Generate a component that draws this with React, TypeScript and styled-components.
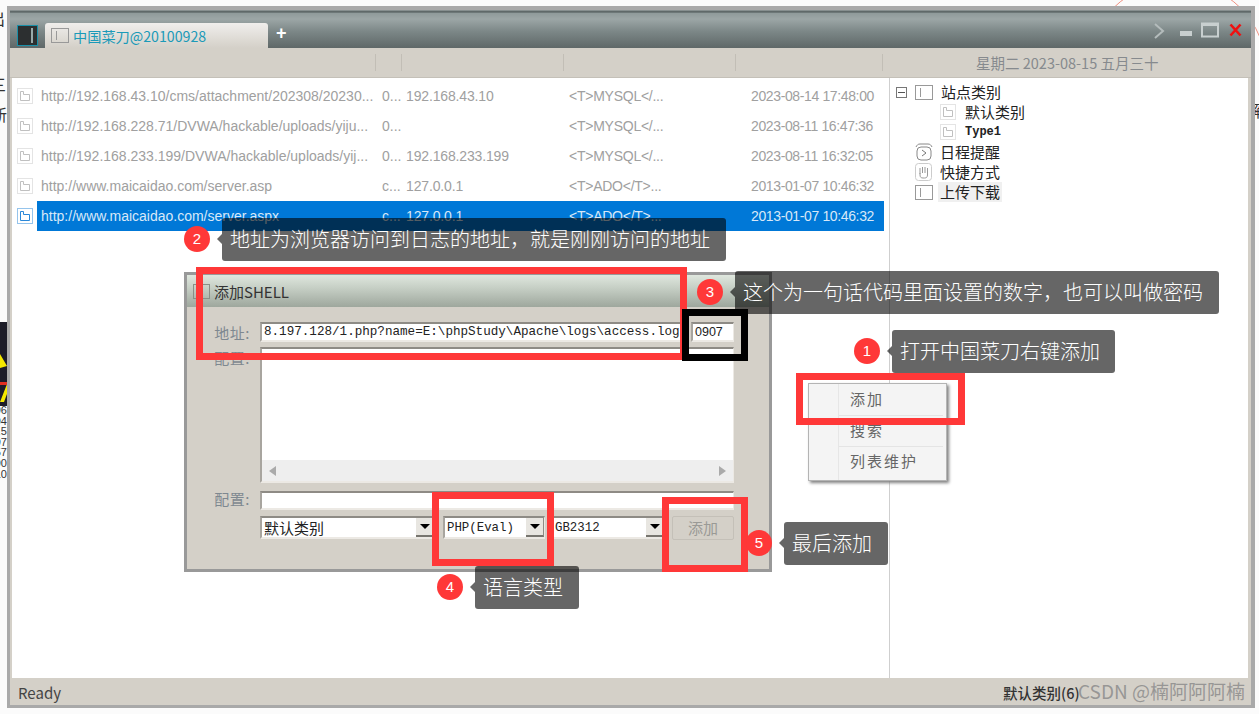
import { FC } from "react";
import styled, { createGlobalStyle } from "styled-components";

const sans = `"Liberation Sans", "Noto Sans CJK SC", sans-serif`;
const cjk = `"Noto Sans CJK SC", "Liberation Sans", sans-serif`;
const mono = `"Liberation Mono", "Noto Sans CJK SC", monospace`;

const rows = [
  ["http://192.168.43.10/cms/attachment/202308/20230...", "0...", "192.168.43.10", "<T>MYSQL</...", "2023-08-14 17:48:00"],
  ["http://192.168.228.71/DVWA/hackable/uploads/yiju...", "0...", "", "<T>MYSQL</...", "2023-08-11 16:47:36"],
  ["http://192.168.233.199/DVWA/hackable/uploads/yij...", "0...", "192.168.233.199", "<T>MYSQL</...", "2023-08-11 16:32:05"],
  ["http://www.maicaidao.com/server.asp", "c...", "127.0.0.1", "<T>ADO</T>...", "2013-01-07 10:46:32"],
  ["http://www.maicaidao.com/server.aspx", "c...", "127.0.0.1", "<T>ADO</T>...", "2013-01-07 10:46:32"],
];

const headerCells = [366, 26, 162, 172, 147];

const callouts = [
  { n: 2, x: 184, y: 218, w: 504, text: "地址为浏览器访问到日志的地址，就是刚刚访问的地址" },
  { n: 3, x: 697, y: 271, w: 484, text: "这个为一句话代码里面设置的数字，也可以叫做密码" },
  { n: 1, x: 854, y: 330, w: 223, text: "打开中国菜刀右键添加" },
  { n: 4, x: 437, y: 566, w: 104, text: "语言类型" },
  { n: 5, x: 746, y: 522, w: 104, text: "最后添加" },
];

const frames = [
  { x: 196, y: 267, w: 491, h: 93, color: "#ff3838" },
  { x: 682, y: 309, w: 66, h: 52, color: "#000000" },
  { x: 796, y: 373, w: 169, h: 52, color: "#ff3838" },
  { x: 432, y: 492, w: 122, h: 74, color: "#ff3838" },
  { x: 662, y: 497, w: 86, h: 75, color: "#ff3838" },
];

const GlobalStyle = createGlobalStyle`
  html, body {
    margin: 0;
    padding: 0;
    background: #ffffff;
  }
  * {
    box-sizing: border-box;
  }
`;

const Page = styled.div`
  position: relative;
  width: 1259px;
  height: 714px;
  overflow: hidden;
  padding: 6px 4px 6px 7px;
  background: #fbfbfb;
  font-family: ${sans};
`;

const BackdropScrap = styled.div<{ $top: number; $left: number; $color?: string }>`
  position: absolute;
  top: ${(p) => p.$top}px;
  left: ${(p) => p.$left}px;
  font-family: ${cjk};
  font-size: 16px;
  line-height: 21px;
  color: ${(p) => p.$color ?? "#333"};
  white-space: pre;
`;

const Numbers = styled.div`
  position: absolute;
  top: 405px;
  left: -12px;
  width: 19px;
  text-align: right;
  font-family: ${sans};
  font-size: 11px;
  line-height: 10.6px;
  color: #333;
`;

const Arc = styled.div`
  position: absolute;
  top: -19px;
  left: 1087px;
  width: 180px;
  height: 180px;
  border: 1px solid #f09080;
  border-radius: 50%;
`;

const ImageScrap = styled.svg`
  position: absolute;
  top: 322px;
  left: 0;
`;

const Window = styled.div`
  position: relative;
  height: 702px;
  display: flex;
  flex-direction: column;
  border: 3px solid #a9a9a9;
  border-top-width: 4px;
  border-right-width: 4px;
  background: #d4d0c8;
`;

const TitleBar = styled.div`
  height: 38px;
  flex: none;
  display: flex;
  align-items: flex-end;
  padding-left: 7px;
  background: linear-gradient(
    to bottom,
    #9aa2a2 0,
    #4c5656 2px,
    #8f9a9a 3px,
    #9ca6a6 9px,
    #7b8686 22px,
    #5f6868 100%
  );
`;

const AppIcon = styled.div`
  width: 21px;
  height: 21px;
  margin-bottom: 2px;
  display: flex;
  justify-content: flex-end;
  padding: 2px 4px 2px 2px;
  border: 1px solid #1a8fa8;
  background: #2c2f30;
  &::after {
    content: "";
    width: 2px;
    background: #9aa;
  }
`;

const Tab = styled.div`
  width: 223px;
  height: 25px;
  margin-left: 7px;
  display: flex;
  align-items: center;
  gap: 4px;
  padding-left: 6px;
  border-radius: 3px 3px 0 0;
  background: linear-gradient(to bottom, #f0eeec, #d4d0c8);
  font-family: ${cjk};
  font-size: 14.2px;
  color: #1b9ab8;
`;

const PlusSign = styled.span`
  align-self: center;
  margin: 8px 0 0 8px;
  font-family: ${sans};
  font-size: 18px;
  font-weight: bold;
  color: #ffffff;
`;

const WindowControls = styled.div`
  margin-left: auto;
  align-self: stretch;
  display: flex;
  align-items: flex-start;
  gap: 7px;
  padding: 12px 9px 0 0;
`;

const ColumnStrip = styled.div`
  height: 30px;
  flex: none;
  display: flex;
  align-items: center;
  border-bottom: 1px solid #c4c0b8;
`;

const StripCell = styled.div<{ $w: number }>`
  width: ${(p) => p.$w}px;
  height: 17px;
  flex: none;
  border-right: 1px solid #c2beb6;
`;

const DateText = styled.div`
  margin-left: 93px;
  font-family: ${cjk};
  font-size: 14.5px;
  color: #868a8e;
  white-space: nowrap;
`;

const Main = styled.div`
  flex: 1;
  min-height: 0;
  display: flex;
  margin: 0 3px 0 2px;
  background: #ffffff;
`;

const ListPane = styled.div`
  width: 878px;
  flex: none;
  padding: 3px 5px 0;
  border-right: 1px solid #cfcfcf;
`;

const ListRow = styled.div`
  height: 30px;
  display: flex;
  align-items: center;
`;

const RowBody = styled.div<{ $selected?: boolean }>`
  width: 847px;
  height: 30px;
  margin-left: 4px;
  padding-left: 4px;
  display: grid;
  grid-template-columns: 341px 24px 163px 182px 1fr;
  align-items: center;
  font-size: 14px;
  white-space: nowrap;
  color: ${(p) => (p.$selected ? "#d8e8f8" : "#a0a0a0")};
  background: ${(p) => (p.$selected ? "#0078d7" : "transparent")};
`;

const Cell = styled.span<{ $squeeze: number }>`
  letter-spacing: ${(p) => p.$squeeze}px;
`;

const TreePane = styled.div`
  flex: 1;
  padding: 4px 0 0 6px;
  font-family: ${cjk};
  font-size: 15px;
  color: #222;
`;

const TreeRow = styled.div<{ $indent: number }>`
  height: 20px;
  display: flex;
  align-items: center;
  padding-left: ${(p) => p.$indent}px;
`;

const Expander = styled.div`
  width: 11px;
  height: 11px;
  margin-right: 8px;
  display: flex;
  align-items: center;
  justify-content: center;
  border: 1px solid #777;
  &::after {
    content: "";
    width: 7px;
    height: 1px;
    background: #555;
  }
`;

const TreeLabel = styled.span<{ $gap: number; $active?: boolean; $latin?: boolean }>`
  margin-left: ${(p) => p.$gap}px;
  padding: 0 2px;
  line-height: 20px;
  white-space: nowrap;
  background: ${(p) => (p.$active ? "#f0f0f0" : "transparent")};
  font-family: ${(p) => (p.$latin ? mono : cjk)};
  font-size: ${(p) => (p.$latin ? "12px" : "15px")};
  font-weight: ${(p) => (p.$latin ? "bold" : "normal")};
`;

const StatusBar = styled.div`
  height: 27px;
  flex: none;
  display: flex;
  align-items: center;
  justify-content: space-between;
  padding: 1px 0 0 8px;
  font-family: ${cjk};
  font-size: 15px;
  color: #444;
`;

const StatusRight = styled.div`
  position: relative;
  width: 248px;
  font-size: 14.5px;
  font-weight: 500;
  color: #333;
  white-space: nowrap;
`;

const Watermark = styled.span`
  position: absolute;
  top: -5px;
  left: 75px;
  font-size: 19px;
  font-weight: 400;
  color: rgba(140, 140, 140, 0.85);
`;

const Dialog = styled.div`
  position: absolute;
  top: 272px;
  left: 184px;
  width: 588px;
  height: 300px;
  display: flex;
  flex-direction: column;
  border: 3px solid #999;
  background: #d4d0c8;
`;

const DialogTitle = styled.div`
  height: 32px;
  flex: none;
  display: flex;
  align-items: center;
  gap: 4px;
  padding-left: 6px;
  background: linear-gradient(to bottom, #dfe7de 0, #c6cfc5 40%, #9ea79d 100%);
  font-family: ${cjk};
  font-size: 15px;
  color: #333;
`;

const DialogBody = styled.div`
  flex: 1;
  display: grid;
  grid-template-columns: 73px 1fr;
  grid-template-rows: 20px 136px 22px 24px;
  row-gap: 5px;
  padding: 15px 35px 0 0;
`;

const FieldLabel = styled.div`
  text-align: right;
  padding-right: 10px;
  font-family: ${cjk};
  font-size: 15px;
  letter-spacing: 0.5px;
  line-height: 21px;
  color: #7e8890;
`;

const Sunken = styled.div`
  background: #ffffff;
  border-top: 2px solid #8e8b85;
  border-left: 2px solid #a8a59f;
  border-bottom: 2px solid #ece9e4;
  border-right: 1px solid #ece9e4;
  font-family: ${mono};
  font-size: 12.6px;
  line-height: 17px;
  color: #222;
  white-space: nowrap;
  overflow: hidden;
`;

const AddressRow = styled.div`
  display: flex;
  gap: 10px;
`;

const AddressField = styled(Sunken)`
  flex: 1;
  padding-left: 2px;
`;

const PassField = styled(Sunken)`
  width: 43px;
  flex: none;
  padding-left: 2px;
  font-family: ${sans};
  font-size: 12.5px;
`;

const TextArea = styled(Sunken)`
  display: flex;
  flex-direction: column;
  justify-content: flex-end;
`;

const ConfigField = styled(Sunken)`
  margin-top: 3px;
`;

const ScrollTrack = styled.div`
  height: 21px;
  display: flex;
  align-items: center;
  justify-content: space-between;
  padding: 0 7px;
  background: #eeeeee;
`;

const ArrowMark = styled.span<{ $dir: "left" | "right" }>`
  width: 0;
  height: 0;
  border-top: 5px solid transparent;
  border-bottom: 5px solid transparent;
  ${(p) => (p.$dir === "left" ? "border-right: 7px solid #aaa;" : "border-left: 7px solid #aaa;")}
`;

const SelectsRow = styled.div`
  grid-column: 2;
  display: flex;
  align-items: flex-start;
  margin-top: 1px;
`;

const Select = styled(Sunken)<{ $w: number; $gap: number }>`
  width: ${(p) => p.$w}px;
  height: 23px;
  margin-right: ${(p) => p.$gap}px;
  display: flex;
  align-items: stretch;
  flex: none;
  line-height: 20px;
  font-size: 12.4px;
`;

const SelectText = styled.div<{ $cjk?: boolean }>`
  flex: 1;
  padding-left: 2px;
  font-family: ${(p) => (p.$cjk ? cjk : mono)};
  font-size: ${(p) => (p.$cjk ? "15px" : "12.4px")};
`;

const SelectButton = styled.div`
  width: 18px;
  display: flex;
  align-items: center;
  justify-content: center;
  background: #e8e6e1;
  border-bottom: 2px solid #77756f;
  border-right: 1px solid #8e8b85;
  &::after {
    content: "";
    border-top: 5px solid #000;
    border-left: 5px solid transparent;
    border-right: 5px solid transparent;
  }
`;

const AddButton = styled.div`
  width: 62px;
  height: 24px;
  margin-left: auto;
  flex: none;
  text-align: center;
  border: 1px solid #c4c0b8;
  border-radius: 2px;
  font-family: ${cjk};
  font-size: 15px;
  line-height: 22px;
  color: #9a9a96;
`;

const Menu = styled.div`
  position: absolute;
  top: 383px;
  left: 808px;
  width: 139px;
  height: 98px;
  padding: 1px 3px 0 30px;
  border: 1px solid #b4b4b4;
  background: #f4f4f4;
  box-shadow: 2px 2px 3px #808080;
`;

const MenuItem = styled.div<{ $line?: boolean }>`
  height: 31px;
  padding: 3px 0 0 11px;
  font-family: ${cjk};
  font-size: 15px;
  letter-spacing: 2px;
  line-height: 22px;
  color: #666;
  border-bottom: ${(p) => (p.$line ? "1px solid #e4e4e4" : "none")};
`;

const MenuGutter = styled.div`
  position: absolute;
  top: 0;
  bottom: 0;
  left: 29px;
  width: 1px;
  background: #e6e6e6;
`;

const Frame = styled.div<{ $x: number; $y: number; $w: number; $h: number; $color: string }>`
  position: absolute;
  top: ${(p) => p.$y}px;
  left: ${(p) => p.$x}px;
  width: ${(p) => p.$w}px;
  height: ${(p) => p.$h}px;
  border: 7px solid ${(p) => p.$color};
`;

const Callout = styled.div<{ $x: number; $y: number }>`
  position: absolute;
  top: ${(p) => p.$y}px;
  left: ${(p) => p.$x}px;
  display: flex;
  align-items: center;
`;

const Badge = styled.div`
  width: 26px;
  height: 26px;
  flex: none;
  border-radius: 50%;
  margin: -2px 12px 0 0;
  background: #ff3838;
  color: #fff;
  text-align: center;
  font-family: ${sans};
  font-size: 15px;
  line-height: 26px;
`;

const Bubble = styled.div<{ $w: number }>`
  position: relative;
  width: ${(p) => p.$w}px;
  height: 43px;
  padding-left: 8px;
  border-radius: 3px;
  background: rgba(0, 0, 0, 0.6);
  font-family: ${cjk};
  font-size: 20px;
  font-weight: 300;
  line-height: 42px;
  color: #ffffff;
  white-space: nowrap;
  &::before {
    content: "";
    position: absolute;
    top: 16px;
    left: -5px;
    border-top: 5px solid transparent;
    border-bottom: 5px solid transparent;
    border-right: 5px solid rgba(0, 0, 0, 0.6);
  }
`;

const PageIcon: FC<{ selected?: boolean }> = ({ selected }) => {
  const c = selected ? "#2b88d8" : "#c8c8c8";
  return (
    <svg width="16" height="16" viewBox="0 0 16 16" fill="none" style={{ flex: "none" }}>
      <rect x="0.5" y="0.5" width="15" height="15" stroke={c} strokeDasharray="1 1" />
      <path d="M3.5 3.5h3v3h6v6h-9z" stroke={selected ? "#2b88d8" : "#c0c0c0"} />
    </svg>
  );
};

const BoxIcon: FC<{ w?: number; h?: number; color?: string }> = ({ w = 18, h = 15, color = "#999" }) => (
  <svg width={w} height={h} viewBox={`0 0 ${w} ${h}`} fill="none" style={{ flex: "none" }}>
    <rect x="0.5" y="0.5" width={w - 1} height={h - 1} stroke={color} />
    <path d={`M5.5 3v${h - 6}`} stroke={color} />
  </svg>
);

const ClockIcon: FC = () => (
  <svg width="18" height="18" viewBox="0 0 18 18" fill="none" style={{ flex: "none" }}>
    <path d="M1 4c1-2 2-3 4-3h8c2 0 3 1 4 3" stroke="#888" />
    <rect x="2" y="4" width="14" height="13" rx="4" stroke="#888" />
    <path d="M7 7l4 3-4 3" stroke="#777" />
  </svg>
);

const HandIcon: FC = () => (
  <svg width="18" height="19" viewBox="0 0 18 19" fill="none" style={{ flex: "none" }}>
    <rect x="0.5" y="0.5" width="16" height="17" rx="3" stroke="#ccc" />
    <path d="M5 5v6M7.5 4v6M10 4v6M12.5 5v7c0 2-1 3-3 3H8c-2 0-3-1-3-3v-2" stroke="#999" />
  </svg>
);

const ChromeIcons: FC = () => (
  <>
    <svg width="11" height="16" viewBox="0 0 11 16" fill="none" style={{ marginRight: 8, marginTop: 1 }}>
      <path d="M1 1l8 7-8 7" stroke="#b4bcbc" strokeWidth="2" />
    </svg>
    <svg width="14" height="18" viewBox="0 0 14 18">
      <rect x="0" y="9" width="12" height="5" fill="#c8cfcf" />
    </svg>
    <svg width="18" height="16" viewBox="0 0 18 16" fill="none">
      <rect x="1" y="1.5" width="16" height="13" stroke="#c8cfcf" strokeWidth="2" />
      <rect x="1" y="1" width="16" height="3" fill="#c8cfcf" />
    </svg>
    <svg width="13" height="14" viewBox="0 0 13 14" fill="none" style={{ marginLeft: 3, marginTop: 1 }}>
      <path d="M1.5 1.5l10 11M11.5 1.5l-10 11" stroke="#f01010" strokeWidth="2.6" />
    </svg>
  </>
);

const squeeze = [0, 0, -0.15, -0.25, -0.37];

const App: FC = () => {
  return (
    <Page>
      <GlobalStyle />
      <Arc />
      <BackdropScrap $top={8} $left={-11}>出</BackdropScrap>
      <BackdropScrap $top={74} $left={-10}>三</BackdropScrap>
      <BackdropScrap $top={104} $left={-9}>新</BackdropScrap>
      <BackdropScrap $top={100} $left={1246}>解</BackdropScrap>
      <BackdropScrap $top={495} $left={-10} $color="#bbb">C</BackdropScrap>
      <BackdropScrap $top={528} $left={-10} $color="#bbb">C</BackdropScrap>
      <ImageScrap width="7" height="84" viewBox="0 0 7 84">
        <rect width="7" height="84" fill="#1c1c28" />
        <path d="M0 32l7 12-7 2zM7 62l-7 18h4l3-8z" fill="#f4e800" />
        <rect y="60" width="7" height="3" fill="#e03020" />
      </ImageScrap>
      <Numbers>
        96
        <br />
        94
        <br />
        .5
        <br />
        97
        <br />
        57
        <br />
        90
        <br />
        10
      </Numbers>

      <Window>
        <TitleBar>
          <AppIcon />
          <Tab>
            <BoxIcon />
            中国菜刀@20100928
          </Tab>
          <PlusSign>+</PlusSign>
          <WindowControls>
            <ChromeIcons />
          </WindowControls>
        </TitleBar>
        <ColumnStrip>
          {headerCells.map((w, i) => (
            <StripCell key={i} $w={w} />
          ))}
          <DateText>星期二 2023-08-15 五月三十</DateText>
        </ColumnStrip>
        <Main>
          <ListPane>
            {rows.map((row, i) => (
              <ListRow key={i}>
                <PageIcon selected={i === 4} />
                <RowBody $selected={i === 4}>
                  {row.map((cell, j) => (
                    <Cell key={j} $squeeze={squeeze[j]}>
                      {cell}
                    </Cell>
                  ))}
                </RowBody>
              </ListRow>
            ))}
          </ListPane>
          <TreePane>
            <TreeRow $indent={0}>
              <Expander />
              <BoxIcon />
              <TreeLabel $gap={6}>站点类别</TreeLabel>
            </TreeRow>
            <TreeRow $indent={44}>
              <PageIcon />
              <TreeLabel $gap={7}>默认类别</TreeLabel>
            </TreeRow>
            <TreeRow $indent={44}>
              <PageIcon />
              <TreeLabel $gap={7} $latin>
                Type1
              </TreeLabel>
            </TreeRow>
            <TreeRow $indent={19}>
              <ClockIcon />
              <TreeLabel $gap={5}>日程提醒</TreeLabel>
            </TreeRow>
            <TreeRow $indent={19}>
              <HandIcon />
              <TreeLabel $gap={5}>快捷方式</TreeLabel>
            </TreeRow>
            <TreeRow $indent={19}>
              <BoxIcon />
              <TreeLabel $gap={5} $active>
                上传下载
              </TreeLabel>
            </TreeRow>
          </TreePane>
        </Main>
        <StatusBar>
          Ready
          <StatusRight>
            默认类别(6)
            <Watermark>CSDN @楠阿阿阿楠</Watermark>
          </StatusRight>
        </StatusBar>
      </Window>

      <Menu>
        <MenuGutter />
        <MenuItem $line>添加</MenuItem>
        <MenuItem $line>搜索</MenuItem>
        <MenuItem>列表维护</MenuItem>
      </Menu>

      <Dialog>
        <DialogTitle>
          <BoxIcon w={17} h={15} color="#8a9088" />
          添加SHELL
        </DialogTitle>
        <DialogBody>
          <FieldLabel>地址:</FieldLabel>
          <AddressRow>
            <AddressField>8.197.128/1.php?name=E:\phpStudy\Apache\logs\access.log</AddressField>
            <PassField>0907</PassField>
          </AddressRow>
          <FieldLabel>配置:</FieldLabel>
          <TextArea>
            <ScrollTrack>
              <ArrowMark $dir="left" />
              <ArrowMark $dir="right" />
            </ScrollTrack>
          </TextArea>
          <FieldLabel>配置:</FieldLabel>
          <ConfigField />
          <SelectsRow>
            <Select $w={175} $gap={8}>
              <SelectText $cjk>默认类别</SelectText>
              <SelectButton />
            </Select>
            <Select $w={102} $gap={6}>
              <SelectText>PHP(Eval)</SelectText>
              <SelectButton />
            </Select>
            <Select $w={114} $gap={0}>
              <SelectText>GB2312</SelectText>
              <SelectButton />
            </Select>
            <AddButton>添加</AddButton>
          </SelectsRow>
        </DialogBody>
      </Dialog>

      {frames.map((f, i) => (
        <Frame key={i} $x={f.x} $y={f.y} $w={f.w} $h={f.h} $color={f.color} />
      ))}

      {callouts.map((c) => (
        <Callout key={c.n} $x={c.x} $y={c.y}>
          <Badge>{c.n}</Badge>
          <Bubble $w={c.w}>{c.text}</Bubble>
        </Callout>
      ))}
    </Page>
  );
};

export default App;
